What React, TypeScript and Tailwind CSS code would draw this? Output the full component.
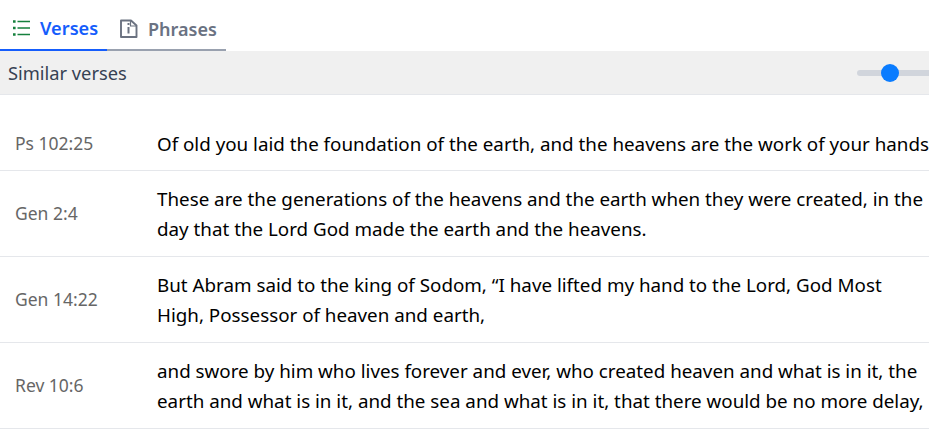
const verses = [
  { ref: "Ps 102:25", lines: ["Of old you laid the foundation of the earth, and the heavens are the work of your hands"] },
  { ref: "Gen 2:4", lines: ["These are the generations of the heavens and the earth when they were created, in the", "day that the Lord God made the earth and the heavens."] },
  { ref: "Gen 14:22", lines: ["But Abram said to the king of Sodom, “I have lifted my hand to the Lord, God Most", "High, Possessor of heaven and earth,"] },
  { ref: "Rev 10:6", lines: ["and swore by him who lives forever and ever, who created heaven and what is in it, the", "earth and what is in it, and the sea and what is in it, that there would be no more delay,"] },
];

function ListIcon() {
  return (
    <svg width="20" height="20" viewBox="0 0 20 20" fill="none" stroke="#15803d" strokeWidth="1.7">
      <path d="M5.5 2.5h12.5M5.5 9h12.5M5.5 15.5h12.5" />
      <path d="M1 2.5h2.6M1 9h2.6M1 15.5h2.6" strokeWidth="2.6" />
    </svg>
  );
}

function InfoIcon() {
  return (
    <svg width="20" height="20" viewBox="0 0 20 20" fill="none" stroke="#6b7280" strokeWidth="1.9" strokeLinejoin="round">
      <path d="M2 1.5h10l5.5 5v11.5h-15.5z" />
      <path d="M11.5 1.5v5.5h6" strokeWidth="1.2" />
      <path d="M9.5 8v6.5" strokeWidth="2" />
      <path d="M9.5 4v2" strokeWidth="2" />
    </svg>
  );
}

export default function App() {
  return (
    <div className="w-[929px] h-[430px] overflow-hidden bg-white font-['Noto_Sans',sans-serif]">
      <div className="flex h-[51px] items-end">
        <div className="flex h-[36px] w-[107px] items-center gap-[8px] border-b-2 border-blue-600 pl-[12px] pb-[6px] text-[18.2px] font-semibold text-blue-600">
          <ListIcon />
          <span>Verses</span>
        </div>
        <div className="flex h-[36px] w-[119px] items-center gap-[9px] border-b-2 border-gray-400 pl-[12px] pb-[6px] text-[18px] font-semibold text-gray-500">
          <InfoIcon />
          <span>Phrases</span>
        </div>
      </div>
      <div className="flex h-[44px] items-center justify-between bg-[#f0f0f0] border-b border-gray-200 pl-[8px]">
        <span className="text-[18.3px] text-gray-700">Similar verses</span>
        <div className="relative h-[6px] w-[72px] rounded-l-full bg-gray-300">
          <div className="absolute left-[24px] top-[-6px] h-[18px] w-[18px] rounded-full bg-[#0a7cff]" />
        </div>
      </div>
      <div className="pt-[18px]">
        {verses.map((v, i) => (
          <div key={v.ref} className={`flex items-center border-b border-gray-200 ${i === 0 ? "h-[58px] pt-[4px]" : "h-[86px]"}`}>
            <div className="w-[157px] shrink-0 pl-[15px] text-[17.5px] text-[#666]">{v.ref}</div>
            <div className="whitespace-nowrap text-[18.8px] leading-[30px] text-black">
              {v.lines.map((l) => (
                <div key={l}>{l}</div>
              ))}
            </div>
          </div>
        ))}
      </div>
    </div>
  );
}
